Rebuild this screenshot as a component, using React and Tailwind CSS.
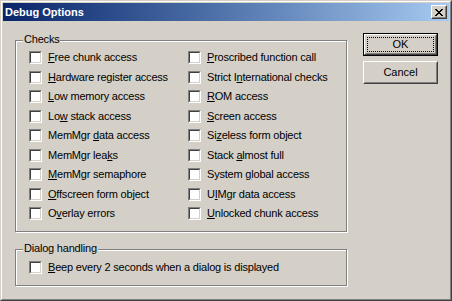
import React from 'react';

// Classic Win2k dialog: etched group boxes, sunken checkboxes, raised buttons.
const FONT = { fontFamily: '"Liberation Sans", Arial, sans-serif' };

const LEFT = [
  ['', 'F', 'ree chunk access'],
  ['', 'H', 'ardware register access'],
  ['', 'L', 'ow memory access'],
  ['Lo', 'w', ' stack access'],
  ['MemMgr ', 'd', 'ata access'],
  ['MemMgr lea', 'k', 's'],
  ['', 'M', 'emMgr semaphore'],
  ['', 'O', 'ffscreen form object'],
  ['O', 'v', 'erlay errors'],
];

const RIGHT = [
  ['', 'P', 'roscribed function call'],
  ['Strict I', 'n', 'ternational checks'],
  ['', 'R', 'OM access'],
  ['', 'S', 'creen access'],
  ['Si', 'z', 'eless form object'],
  ['Stack ', 'a', 'lmost full'],
  ['System ', 'g', 'lobal access'],
  ['U', 'I', 'Mgr data access'],
  ['', 'U', 'nlocked chunk access'],
];

function Box() {
  return (
    <span className="block w-[13px] h-[13px] shrink-0 border border-t-[#808080] border-l-[#808080] border-b-white border-r-white">
      <span className="block w-full h-full bg-white border border-t-[#404040] border-l-[#404040] border-b-[#d4d0c8] border-r-[#d4d0c8]" />
    </span>
  );
}

function Check({ label }) {
  const [pre, key, post] = label;
  return (
    <div className="flex items-center h-[19.5px]">
      <Box />
      <span className="ml-[6px] text-[11px] leading-[13px] tracking-[-0.2px] text-black whitespace-nowrap">
        {pre}
        <span className="underline underline-offset-[1px]">{key}</span>
        {post}
      </span>
    </div>
  );
}

function Group({ title, className, children }) {
  return (
    <div className={`relative border border-[#808080] shadow-[inset_1px_1px_0_#fff,1px_1px_0_#fff] ${className}`}>
      <span className="absolute left-[7px] top-[-8px] bg-[#d4d0c8] px-[1px] text-[11px] leading-[13px] tracking-[-0.2px] text-black">
        {title}
      </span>
      {children}
    </div>
  );
}

function Button({ children, isDefault }) {
  if (isDefault) {
    return (
      <div className="w-[75px] h-[23px] border border-black">
        <div className="w-full h-full border border-t-white border-l-white border-b-[#404040] border-r-[#404040]">
          <div className="w-full h-full border border-t-[#d4d0c8] border-l-[#d4d0c8] border-b-[#808080] border-r-[#808080] p-[1px]">
            <div className="w-full h-full border border-dotted border-black flex items-center justify-center text-[11px] text-black">
              {children}
            </div>
          </div>
        </div>
      </div>
    );
  }
  return (
    <div className="w-[75px] h-[23px] border border-t-white border-l-white border-b-[#404040] border-r-[#404040]">
      <div className="w-full h-full border border-t-[#d4d0c8] border-l-[#d4d0c8] border-b-[#808080] border-r-[#808080] flex items-center justify-center text-[11px] text-black">
        {children}
      </div>
    </div>
  );
}

export default function App() {
  return (
    <div style={FONT} className="w-[452px] h-[301px] border border-t-[#d4d0c8] border-l-[#d4d0c8] border-b-[#404040] border-r-[#404040]">
      <div className="w-full h-full border border-t-white border-l-white border-b-[#808080] border-r-[#808080] bg-[#d4d0c8] p-[1px] flex flex-col">
        {/* title bar */}
        <div className="h-[18px] flex items-center justify-between pl-[2px] pr-[2px] bg-gradient-to-r from-[#0a246a] to-[#a6caf0]">
          <span className="text-white font-bold text-[11px] leading-[13px]">Debug Options</span>
          <div className="w-[16px] h-[14px] border border-t-white border-l-white border-b-[#404040] border-r-[#404040]">
            <div className="w-full h-full bg-[#d4d0c8] border border-t-[#d4d0c8] border-l-[#d4d0c8] border-b-[#808080] border-r-[#808080] flex items-center justify-center">
              <svg width="8" height="7" viewBox="0 0 8 7" shapeRendering="crispEdges">
                <path d="M0 0h2v1H0zM6 0h2v1H6zM1 1h2v1H1zM5 1h2v1H5zM2 2h4v1H2zM3 3h2v1H3zM2 4h4v1H2zM1 5h2v1H1zM5 5h2v1H5zM0 6h2v1H0zM6 6h2v1H6z" fill="#000" />
              </svg>
            </div>
          </div>
        </div>

        {/* body */}
        <div className="flex pl-[12px]">
          <div className="flex flex-col w-[332px]">
            <Group title="Checks" className="mt-[19px] h-[192px] pt-[7px] pl-[13px]">
              <div className="flex">
                <div className="w-[159px] flex flex-col">
                  {LEFT.map((l, i) => <Check key={i} label={l} />)}
                </div>
                <div className="flex flex-col">
                  {RIGHT.map((l, i) => <Check key={i} label={l} />)}
                </div>
              </div>
            </Group>
            <Group title="Dialog handling" className="mt-[17px] h-[37px] pt-[11px] pl-[13px]">
              <div className="flex items-center h-[13px]">
                <Box />
                <span className="ml-[6px] text-[11px] leading-[13px] tracking-[-0.2px] text-black whitespace-nowrap">
                  <span className="underline underline-offset-[1px]">B</span>eep every 2 seconds when a dialog is displayed
                </span>
              </div>
            </Group>
          </div>
          <div className="ml-[16px] pt-[12px] flex flex-col gap-[5px]">
            <Button isDefault>OK</Button>
            <Button>Cancel</Button>
          </div>
        </div>
      </div>
    </div>
  );
}
